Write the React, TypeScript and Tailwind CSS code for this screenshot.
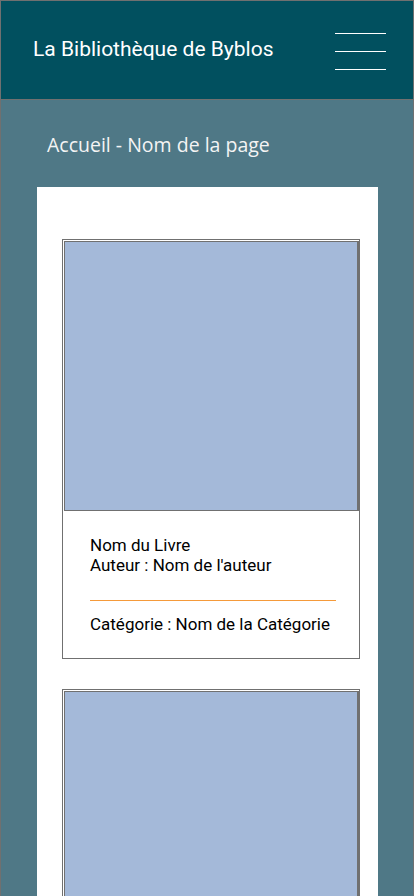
import React from "react";

function BookCard() {
  return (
    <div className="border border-[#707070] bg-white">
      <div className="ml-[1px] mt-[1px] h-[270px] border-l border-t border-r-2 border-b border-[#707070] bg-[#a4b9d9]" />
      <div className="pl-[27px] pr-[23px] pt-[24px] pb-[24px] text-[17px] leading-[20px] text-black font-['Roboto',sans-serif]">
        <p>Nom du Livre</p>
        <p>Auteur : Nom de l'auteur</p>
        <div className="mt-[25px] mb-[13px] h-px bg-[#f59a3a]" />
        <p>Catégorie : Nom de la Catégorie</p>
      </div>
    </div>
  );
}

export default function App() {
  return (
    <div className="w-[414px] min-h-screen border border-[#707070] bg-[#4f7886]">
      <header className="h-[99px] border-b border-[#707070] bg-[#01505f] flex items-center justify-between pl-[32px] pr-[27px]">
        <h1 className="text-white text-[21px] font-['Roboto',sans-serif]">La Bibliothèque de Byblos</h1>
        <div className="flex flex-col gap-[17px] pt-[2px]">
          <span className="block w-[51px] h-px bg-white" />
          <span className="block w-[51px] h-px bg-white" />
          <span className="block w-[51px] h-px bg-white" />
        </div>
      </header>
      <main>
        <h2 className="pl-[46px] pt-[30px] pb-[27px] text-[19.5px] leading-[30px] text-[#f4f4f4] font-['Open_Sans',sans-serif]">
          Accueil - Nom de la page
        </h2>
        <div className="ml-[36px] mr-[35px] bg-white pt-[52px] pb-[40px] pl-[25px] pr-[18px] flex flex-col gap-[30px]">
          <BookCard />
          <BookCard />
        </div>
      </main>
    </div>
  );
}
